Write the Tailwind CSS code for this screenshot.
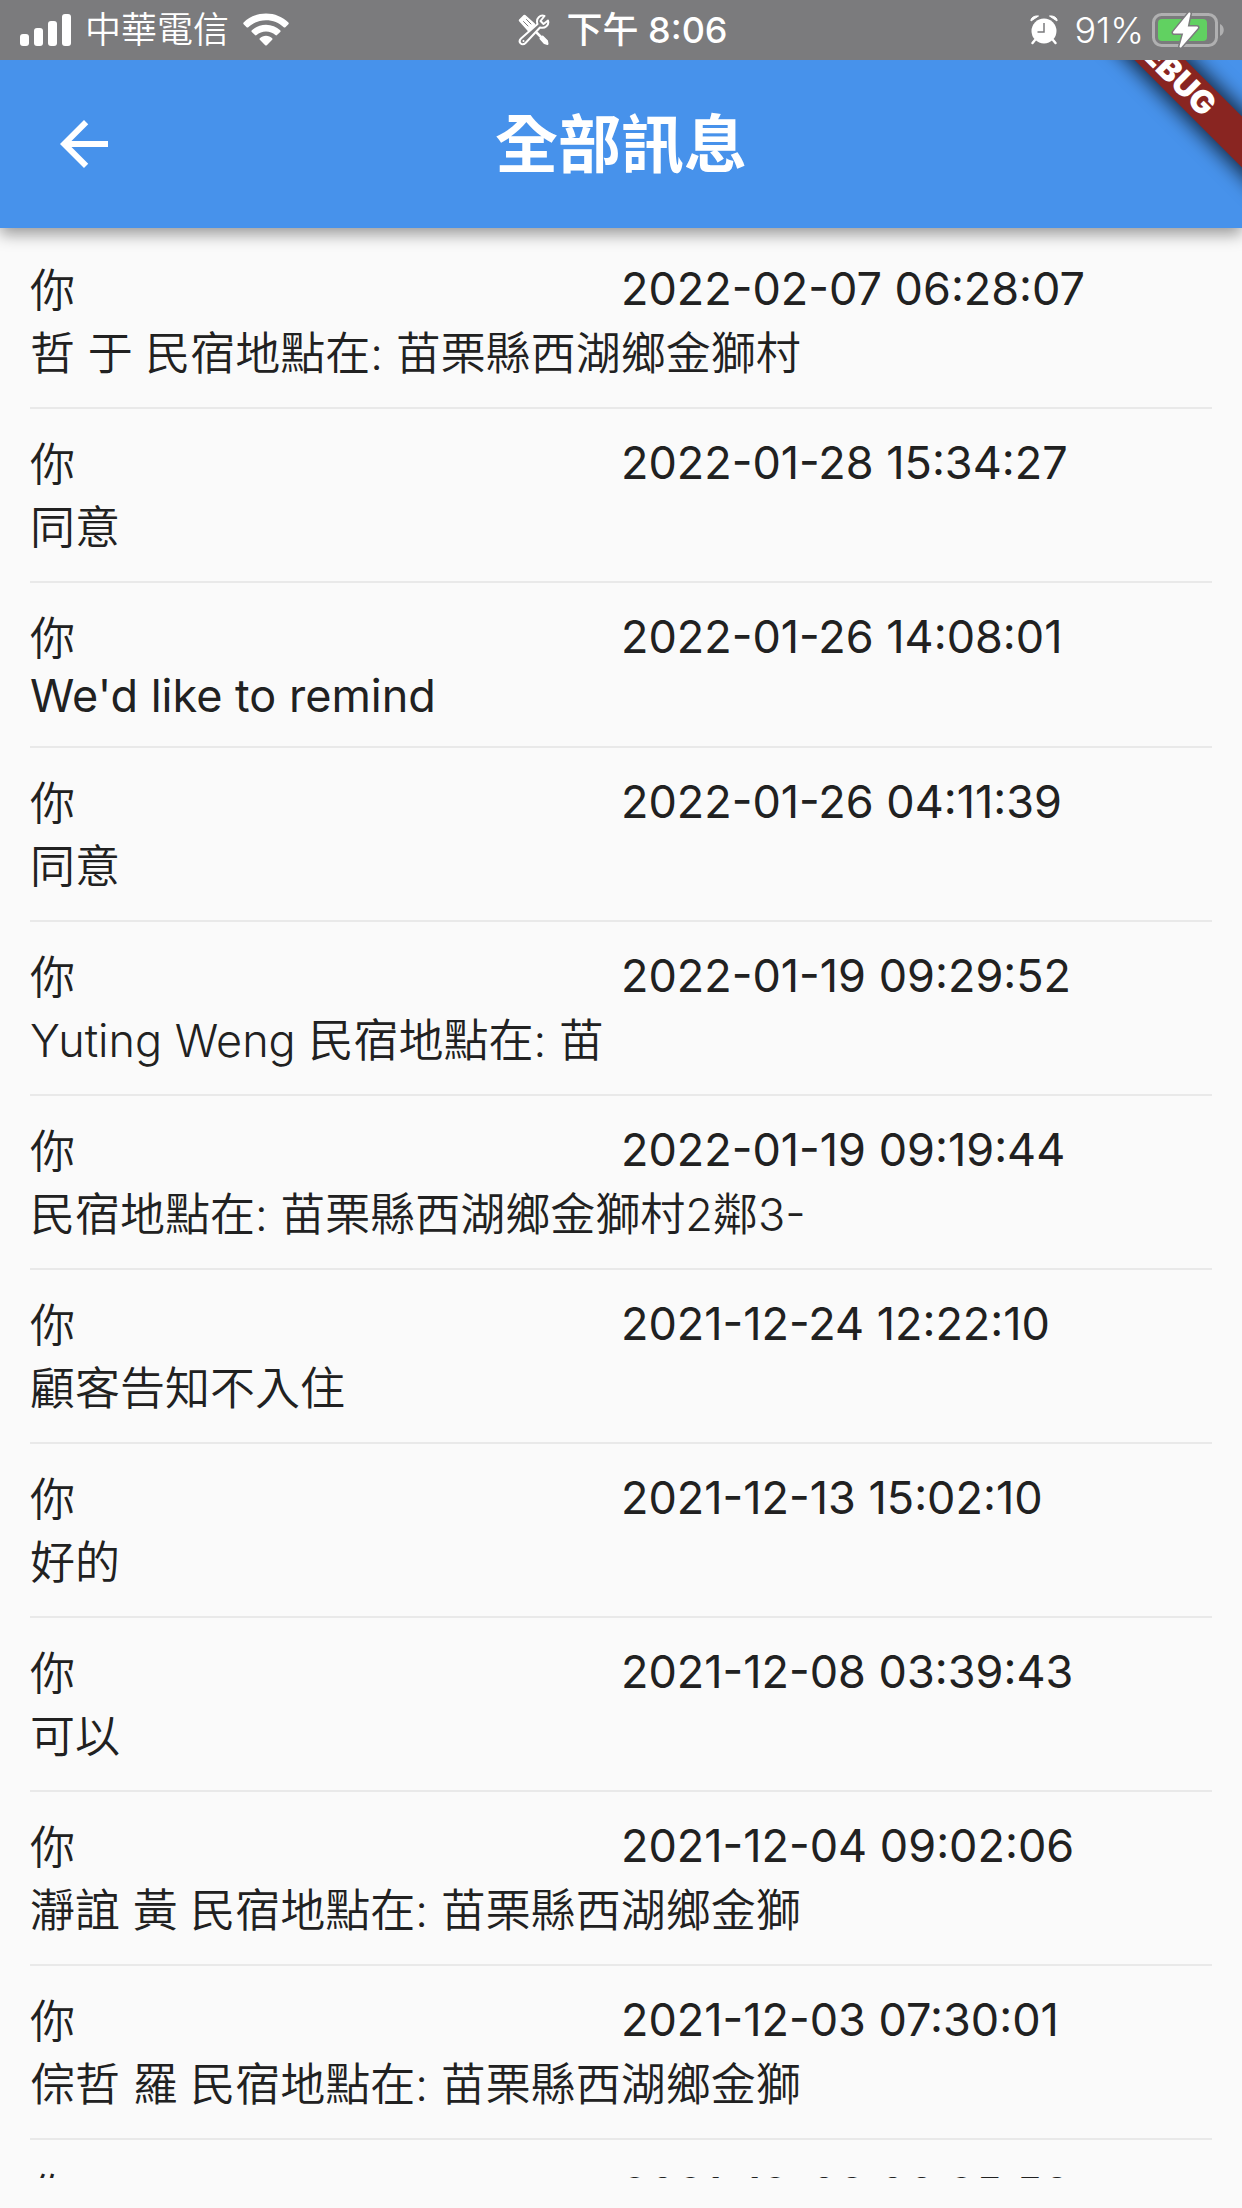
<!DOCTYPE html>
<html lang="zh-Hant">
<head>
    <meta charset="UTF-8">
    <meta name="viewport" content="width=device-width, initial-scale=1.0">
    <title>全部訊息</title>
    <script src="https://cdn.jsdelivr.net/npm/@tailwindcss/browser@4"></script>
</head>

<body class="h-screen flex flex-col overflow-hidden bg-[#fafafa] text-[#212121] font-['Inter','Noto_Sans_CJK_TC',sans-serif]">
    <!-- Status bar -->
    <div class="relative z-20 h-[60px] shrink-0 grid grid-cols-3 items-center pl-5 pr-4 bg-[#7b7b7d] text-white text-[36px] leading-none">
        <div class="flex items-center gap-3.5">
            <svg class="w-[51px] h-8" viewBox="0 0 51 32" fill="currentColor">
                <rect x="0" y="20" width="9" height="12" rx="3"/>
                <rect x="14" y="14" width="9" height="18" rx="3"/>
                <rect x="28" y="7" width="9" height="25" rx="3"/>
                <rect x="42" y="0" width="9" height="32" rx="3"/>
            </svg>
            <span class="font-[350]">中華電信</span>
            <svg class="w-[46px] h-[34px]" viewBox="0 0 46 34" fill="currentColor">
                <path d="M23 0.500C14.300 0.500 6.300 3.900 0.600 9.500c-.5.5-.5 1.200 0 1.700l3 3c.5.5 1.200.5 1.700 0C9.900 9.800 16.100 7.200 23 7.200s13.100 2.600 17.700 7c.5.5 1.200.5 1.700 0l3-3c.5-.5.5-1.200 0-1.700C39.700 3.900 31.700.5 23 .5z"/>
                <path d="M23 11.700c-5.500 0-10.500 2.100-14.200 5.600-.5.500-.5 1.200 0 1.700l3.200 3.100c.4.4 1.100.4 1.600 0 2.500-2.300 5.800-3.600 9.400-3.600s6.900 1.300 9.400 3.600c.5.4 1.200.4 1.600 0l3.200-3.100c.5-.5.5-1.200 0-1.700-3.700-3.500-8.700-5.600-14.200-5.600z"/>
                <path d="M23 22.800c-2.400 0-4.600.9-6.200 2.400-.5.500-.5 1.100 0 1.600l5.400 5.400c.5.500 1.100.5 1.600 0l5.400-5.400c.5-.5.500-1.100 0-1.600-1.600-1.500-3.800-2.400-6.200-2.400z"/>
            </svg>
        </div>
        <div class="flex items-center justify-center gap-4">
            <svg class="w-8 h-8" viewBox="0 0 32 32" fill="none" stroke="currentColor" stroke-linecap="round" stroke-linejoin="round">
                <path d="M2 6.500 6.500 2 16 10.500 10.500 16z" fill="currentColor" stroke-width="2.500"/>
                <path d="M5.500 7.500 10 12M8.500 5.500 13 10" stroke="#7b7b7d" stroke-width="1"/>
                <path d="M19 19 24.500 24.500" stroke-width="2.500"/>
                <path d="M22.500 24.500 24.500 22.500 29 27 29.500 30 26.500 29z" fill="currentColor" stroke-width="2"/>
                <path d="M26.500 2C22.500.500 17.500 4 19.500 10L3 24.500C-.500 28 4 32.500 7.500 29L22 13.500C27 15 31.500 11 30 6.500L25.500 10 22.500 7z" stroke-width="2"/>
                <circle cx="5.500" cy="27" r="1" fill="currentColor" stroke="none"/>
            </svg>
            <span class="font-medium">下午 8:06</span>
        </div>
        <div class="flex items-center justify-end gap-2">
            <svg class="w-7 h-[30px] mr-2" viewBox="0 0 28 30">
                <g stroke="#fff" stroke-linecap="round" stroke-width="2.500">
                    <path d="M5 25 2.500 28M23 25 25.500 28"/>
                </g>
                <circle cx="14" cy="16" r="12.500" fill="#fff"/>
                <path d="M1 6C.500 3 4 .500 8.500 1zM27 6C27.500 3 24 .500 19.500 1z" fill="#fff" stroke="#fff" stroke-linejoin="round"/>
                <path d="M14 8v9H7.500" fill="none" stroke="#7b7b7d" stroke-width="1.500"/>
            </svg>
            <span class="font-[350]">91%</span>
            <svg class="w-[74px] h-9" viewBox="0 0 74 36">
                <rect x="1.500" y="2.500" width="63" height="31" rx="8" fill="none" stroke="#b0b0b1" stroke-width="3"/>
                <path d="M68 12c5 2 5 10 0 12z" fill="#b0b0b1"/>
                <rect x="6" y="7" width="49" height="22" rx="4" fill="#61d161"/>
                <path d="M37.500 1.500 22 20.500H32.500L28.500 34.500 45 15.500H34.500z" fill="#fff" stroke="#7b7b7d" stroke-width="5" stroke-linejoin="round"/>
                <path d="M37.500 1.500 22 20.500H32.500L28.500 34.500 45 15.500H34.500z" fill="#fff" stroke="#fff" stroke-width="2" stroke-linejoin="round"/>
            </svg>
        </div>
    </div>

    <!-- App bar -->
    <header class="relative z-10 h-[168px] shrink-0 grid grid-cols-[168px_1fr_168px] items-center bg-[#4792eb] text-white shadow-[0_6px_15px_rgba(0,0,0,0.4)]">
        <button type="button" aria-label="返回" class="w-[168px] h-[168px] flex items-center justify-center">
            <svg class="w-[72px] h-[72px]" viewBox="0 0 24 24" fill="currentColor">
                <path d="M20 11H7.830l5.590-5.590L12 4l-8 8 8 8 1.410-1.410L7.830 13H20v-2z"/>
            </svg>
        </button>
        <h1 class="text-center text-[63px] leading-none font-bold">全部訊息</h1>
        <div class="absolute inset-0 overflow-hidden pointer-events-none">
            <div class="absolute -top-[7px] -right-[79px] w-[300px] h-9 rotate-45 flex items-center justify-center bg-[#892521] shadow-[0_0_18px_6px_rgba(0,0,0,0.65)] text-[32px] leading-none font-black">DEBUG</div>
        </div>
    </header>

    <!-- Messages -->
    <main class="flex-1 min-h-0 overflow-hidden mb-[30px] px-[30px] pt-[7px]">
        <ul id="messageList" class="text-[45px]"></ul>
    </main>

    <script>
        const messages = [
            { from: '你', time: '2022-02-07 06:28:07', text: '哲 于 民宿地點在: 苗栗縣西湖鄉金獅村' },
            { from: '你', time: '2022-01-28 15:34:27', text: '同意' },
            { from: '你', time: '2022-01-26 14:08:01', text: "We'd like to remind" },
            { from: '你', time: '2022-01-26 04:11:39', text: '同意' },
            { from: '你', time: '2022-01-19 09:29:52', text: 'Yuting Weng 民宿地點在: 苗' },
            { from: '你', time: '2022-01-19 09:19:44', text: '民宿地點在: 苗栗縣西湖鄉金獅村2鄰3-' },
            { from: '你', time: '2021-12-24 12:22:10', text: '顧客告知不入住' },
            { from: '你', time: '2021-12-13 15:02:10', text: '好的' },
            { from: '你', time: '2021-12-08 03:39:43', text: '可以' },
            { from: '你', time: '2021-12-04 09:02:06', text: '瀞誼 黃 民宿地點在: 苗栗縣西湖鄉金獅' },
            { from: '你', time: '2021-12-03 07:30:01', text: '倧哲 羅 民宿地點在: 苗栗縣西湖鄉金獅' },
            { from: '你', time: '2021-12-03 06:25:58', text: '' }
        ];

        const list = document.getElementById('messageList');

        messages.forEach(message => {
            // lines without Chinese text are less tall
            const hasChinese = /[\u4e00-\u9fff]/.test(message.text);
            const lineClass = hasChinese ? 'font-[350] leading-[62px] pb-0.5' : 'leading-[50px] pb-[5px]';
            const item = document.createElement('li');
            item.className = 'border-b-2 border-[#e9e9e9] pt-6 pb-5';
            item.innerHTML = `
                <div class="grid grid-cols-2 leading-[64px]">
                    <span class="font-[350]">${message.from}</span>
                    <time class="leading-[60px]">${message.time}</time>
                </div>
                <p class="whitespace-nowrap ${lineClass}">${message.text}</p>
            `;
            list.appendChild(item);
        });
    </script>
</body>
</html>
